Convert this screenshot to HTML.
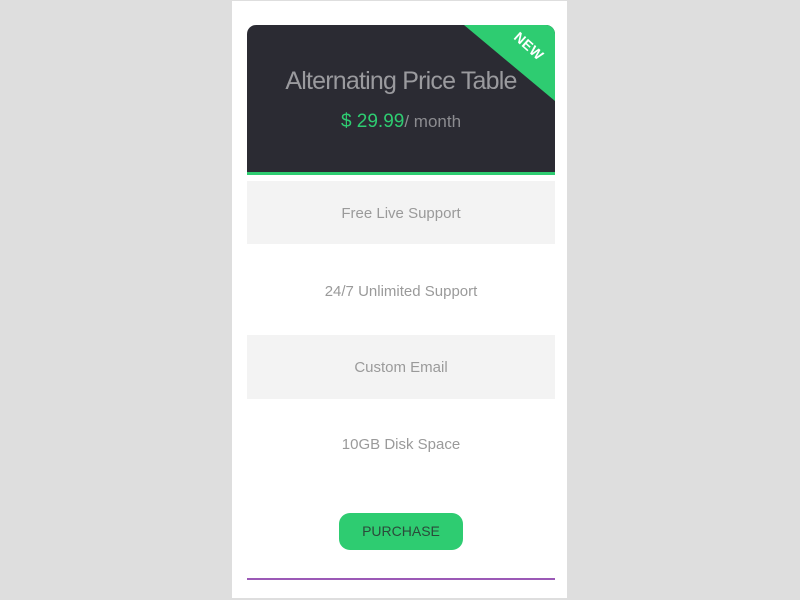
<!DOCTYPE html>
<html><head><style>
body{margin:0;width:800px;height:600px;background:#dedede;font-family:"Liberation Sans",sans-serif;position:relative;overflow:hidden}
.panel{position:absolute;left:232px;top:1px;width:335px;height:597px;background:#fff}
.head{position:absolute;left:247px;top:25px;width:308px;height:147px;background:#2b2b33;border-radius:9px 9px 0 0;overflow:hidden}
.gl{position:absolute;left:247px;top:172px;width:308px;height:3px;background:#2ecc71}
.tri{position:absolute;right:0;top:0;width:0;height:0;border-top:76px solid #2ecc71;border-left:91px solid transparent}
.new{position:absolute;left:512px;top:38px;color:#fff;font-size:14px;font-weight:bold;transform:rotate(42deg);letter-spacing:0.5px}
.title{position:absolute;left:247px;width:308px;top:67px;text-align:center;color:#9a9a9e;font-size:25px;letter-spacing:-0.8px}
.price{position:absolute;left:247px;width:308px;top:111px;text-align:center;color:#8c8c90;font-size:17px}
.price span{color:#2ecc71;font-size:19px}
.row{position:absolute;left:247px;width:308px;text-align:center;color:#9a9a9a;font-size:15px}
.g{background:#f3f3f3}
.btn{position:absolute;left:339px;top:513px;width:124px;height:37px;background:#2ecc71;border-radius:11px;color:#2b4a3a;font-size:14px;text-align:center;line-height:37px}
.pl{position:absolute;left:247px;top:578px;width:308px;height:2px;background:#9b59b6}
</style></head><body>
<div class="panel"></div>
<div class="head"><div class="tri"></div></div>
<div class="new">NEW</div>
<div class="title">Alternating Price Table</div>
<div class="price"><span>$ 29.99</span>/ month</div>
<div class="gl"></div>
<div class="row g" style="top:181px;height:63px;line-height:65px">Free Live Support</div>
<div class="row" style="top:258px;height:66px;line-height:68px">24/7 Unlimited Support</div>
<div class="row g" style="top:335px;height:64px;line-height:66px">Custom Email</div>
<div class="row" style="top:412px;height:64px;line-height:66px">10GB Disk Space</div>
<div class="btn">PURCHASE</div>
<div class="pl"></div>
</body></html>
